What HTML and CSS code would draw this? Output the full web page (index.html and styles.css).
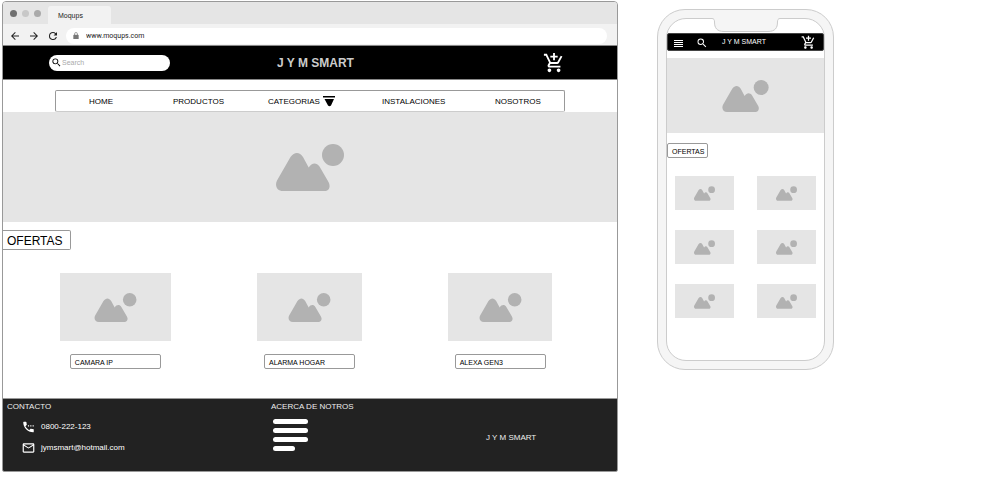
FILE: index.html
```html
<!DOCTYPE html>
<html lang="es">
<head>
<meta charset="utf-8">
<meta name="viewport" content="width=device-width, initial-scale=1">
<title>J Y M SMART</title>
<link rel="stylesheet" href="styles.css">
</head>
<body>
<svg class="symbols" aria-hidden="true">
  <symbol id="picture" viewBox="0 0 68 47">
    <circle cx="57" cy="11" r="11"/>
    <path d="M1 36.500L14.500 13C18.500 7.500 23.500 7.500 27 13L32.700 23.500C36 18.500 40.500 18.500 43.500 22.500L52.500 38C55 42.500 53 47 48.500 47H7C1 47-1.500 41.500 1 36.500Z"/>
  </symbol>
  <symbol id="cart" viewBox="0 0 24 24">
    <path d="M11 9h2V6h3V4h-3V1h-2v3H8v2h3v3zm-4 9c-1.100 0-1.990.9-1.990 2S5.900 22 7 22s2-.9 2-2-.9-2-2-2zm10 0c-1.100 0-1.990.9-1.990 2s.89 2 1.990 2 2-.9 2-2-.9-2-2-2zm-9.830-3.250.03-.12.900-1.630h7.450c.750 0 1.410-.410 1.750-1.030l3.860-7.010L19.420 4l-1.100 2-2.760 5H8.530l-.13-.270L6.160 6l-.950-2-.940-2H1v2h2l3.600 7.590-1.350 2.450c-.160.280-.250.610-.250.960 0 1.100.9 2 2 2h12v-2H7.420c-.130 0-.250-.110-.250-.250z"/>
  </symbol>
  <symbol id="search" viewBox="0 0 24 24">
    <path d="M15.500 14h-.79l-.28-.27A6.470 6.470 0 0 0 16 9.500 6.500 6.500 0 1 0 9.500 16c1.610 0 3.090-.59 4.230-1.570l.27.28v.79l5 4.990L20.490 19l-4.990-5zm-6 0C7.010 14 5 11.990 5 9.500S7.010 5 9.500 5 14 7.010 14 9.500 11.990 14 9.500 14z"/>
  </symbol>
  <symbol id="back" viewBox="0 0 24 24"><path d="M20 11H7.830l5.590-5.590L12 4l-8 8 8 8 1.410-1.410L7.830 13H20v-2z"/></symbol>
  <symbol id="forward" viewBox="0 0 24 24"><path d="M12 4l-1.410 1.410L16.170 11H4v2h12.170l-5.580 5.590L12 20l8-8z"/></symbol>
  <symbol id="reload" viewBox="0 0 24 24"><path d="M17.650 6.350A7.960 7.960 0 0 0 12 4a8 8 0 1 0 7.730 10h-2.080A6 6 0 1 1 12 6c1.660 0 3.140.69 4.220 1.780L13 11h7V4l-2.350 2.350z"/></symbol>
  <symbol id="lock" viewBox="0 0 24 24"><path d="M18 8h-1V6A5 5 0 0 0 7 6v2H6a2 2 0 0 0-2 2v11h16V10a2 2 0 0 0-2-2zM9 8V6a3 3 0 0 1 6 0v2z"/></symbol>
  <symbol id="phone" viewBox="0 0 24 24"><path d="M11 9h2v2h-2zm4 0h2v2h-2zm5 6.500c-1.250 0-2.450-.2-3.570-.57-.35-.11-.74-.03-1.020.24l-2.200 2.200a15.100 15.100 0 0 1-6.590-6.590l2.200-2.210c.28-.26.36-.65.25-1A11.360 11.360 0 0 1 8.500 4c0-.55-.45-1-1-1H4c-.55 0-1 .45-1 1 0 9.390 7.610 17 17 17 .55 0 1-.45 1-1v-3.500c0-.55-.45-1-1-1zM19 9v2h2V9z"/></symbol>
  <symbol id="mail" viewBox="0 0 24 24"><path d="M20 4H4c-1.100 0-1.990.9-1.990 2L2 18c0 1.100.9 2 2 2h16c1.100 0 2-.9 2-2V6c0-1.100-.9-2-2-2zm0 14H4V8l8 5 8-5v10zm-8-7L4 6h16l-8 5z"/></symbol>
</svg>

<main class="board">
  <section class="browser" aria-label="Vista de escritorio">
    <div class="tabs">
      <span class="dot dot-dark"></span><span class="dot"></span><span class="dot dot-mid"></span>
      <span class="tab">Moqups</span>
    </div>
    <div class="toolbar">
      <button class="tool" aria-label="Atrás"><svg><use href="#back"/></svg></button>
      <button class="tool" aria-label="Adelante"><svg><use href="#forward"/></svg></button>
      <button class="tool" aria-label="Recargar"><svg><use href="#reload"/></svg></button>
      <div class="address">
        <svg aria-hidden="true"><use href="#lock"/></svg>
        <input class="url" type="text" aria-label="Dirección" value="www.moqups.com">
      </div>
    </div>

    <header class="site-header">
      <label class="search">
        <svg aria-hidden="true"><use href="#search"/></svg>
        <input type="search" aria-label="Buscar" placeholder="Search">
      </label>
      <h1 class="brand">J Y M SMART</h1>
      <button class="cart" aria-label="Carrito"><svg><use href="#cart"/></svg></button>
    </header>

    <nav class="menu">
      <a href="#">HOME</a>
      <a href="#">PRODUCTOS</a>
      <a class="menu-drop" href="#">CATEGORIAS
        <svg viewBox="0 0 12 12" aria-hidden="true"><path d="M0 0h12v1.500H0zM1.500 3h9.500L8 9.500Q6.500 11 5 9.500z"/></svg>
      </a>
      <a href="#">INSTALACIONES</a>
      <a href="#">NOSOTROS</a>
    </nav>

    <div class="placeholder banner"><svg><use href="#picture"/></svg></div>
    <h2 class="offers-title">OFERTAS</h2>

    <div class="products">
      <figure class="product product-wide">
        <div class="placeholder"><svg><use href="#picture"/></svg></div>
        <figcaption>CAMARA IP</figcaption>
      </figure>
      <figure class="product product-mid">
        <div class="placeholder"><svg><use href="#picture"/></svg></div>
        <figcaption>ALARMA HOGAR</figcaption>
      </figure>
      <figure class="product">
        <div class="placeholder"><svg><use href="#picture"/></svg></div>
        <figcaption>ALEXA GEN3</figcaption>
      </figure>
    </div>

    <footer class="site-footer">
      <section>
        <h3>CONTACTO</h3>
        <ul class="contact">
          <li><svg aria-hidden="true"><use href="#phone"/></svg><a href="tel:0800222123">0800-222-123</a></li>
          <li><svg aria-hidden="true"><use href="#mail"/></svg><a href="mailto:jymsmart@hotmail.com">jymsmart@hotmail.com</a></li>
        </ul>
      </section>
      <section>
        <h3>ACERCA DE NOTROS</h3>
        <div class="lines"><i></i><i></i><i></i><i class="short"></i></div>
      </section>
      <p class="signature">J Y M SMART</p>
    </footer>
  </section>

  <section class="device" aria-label="Vista móvil">
    <div class="screen">
      <svg class="notch" viewBox="0 0 68 15" aria-hidden="true"><path d="M0 0V1C2 1 2 2 2 4C2 10 5 13.500 12 13.500H56C63 13.500 66 10 66 4C66 2 66 1 68 1V0Z"/><path class="notch-edge" d="M0 .5C2 .5 2.500 2 2.500 4C2.500 10 5 13.500 12 13.500H56C63 13.500 65.500 10 65.500 4C65.500 2 66 .5 68 .5"/></svg>
      <header class="app-header">
        <button class="app-menu" aria-label="Menú"><i></i><i></i><i></i><i></i></button>
        <button class="app-search" aria-label="Buscar"><svg><use href="#search"/></svg></button>
        <strong>J Y M SMART</strong>
        <button class="app-cart" aria-label="Carrito"><svg><use href="#cart"/></svg></button>
      </header>
      <div class="placeholder app-banner"><svg><use href="#picture"/></svg></div>
      <h2 class="app-title">OFERTAS</h2>
      <div class="tiles">
        <div class="placeholder"><svg><use href="#picture"/></svg></div>
        <div class="placeholder"><svg><use href="#picture"/></svg></div>
        <div class="placeholder"><svg><use href="#picture"/></svg></div>
        <div class="placeholder"><svg><use href="#picture"/></svg></div>
        <div class="placeholder"><svg><use href="#picture"/></svg></div>
        <div class="placeholder"><svg><use href="#picture"/></svg></div>
      </div>
    </div>
  </section>
</main>
</body>
</html>
```
FILE: styles.css
```css
* { box-sizing: border-box; }

body {
  margin: 0;
  background: #fff;
  color: #000;
  font: 8px/10px "Liberation Sans", Arial, sans-serif;
}

h1, h2, h3, p, ul, figure { margin: 0; padding: 0; font-weight: normal; }
ul { list-style: none; }
a { color: inherit; text-decoration: none; }
svg { display: block; fill: currentColor; }
button { display: block; padding: 0; border: 0; background: none; color: inherit; }
input { min-width: 0; padding: 0; border: 0; outline: 0; background: none; font: inherit; }

.symbols { display: none; }

.board {
  display: grid;
  grid-template-columns: 616fr 177px 132fr;
  column-gap: 39px;
  align-items: start;
  padding: 1px 0 0 2px;
}

.placeholder {
  display: flex;
  align-items: center;
  justify-content: center;
  background: #e5e5e5;
  color: #b2b2b2;
}

/* Desktop window */
.browser {
  border: 1px solid #999;
  border-radius: 4px 4px 2px 2px;
  overflow: hidden;
}

.tabs {
  display: flex;
  align-items: center;
  gap: 5px;
  height: 22px;
  padding-left: 7px;
  background: #e5e5e5;
}
.dot { width: 7px; height: 7px; border-radius: 50%; background: #c8c8c8; }
.dot-dark { background: #707070; }
.dot-mid { background: #aaa; }
.tab {
  align-self: flex-end;
  width: 63px;
  height: 18px;
  margin-left: 2px;
  padding-left: 10px;
  border-radius: 3px 3px 0 0;
  background: #f2f2f2;
  color: #222;
  font-size: 7px;
  line-height: 20px;
}

.toolbar {
  display: flex;
  align-items: center;
  height: 21px;
  padding: 2px 10px 0 6px;
  gap: 7px;
  background: #f2f2f2;
  color: #222;
}
.tool svg { width: 12px; height: 12px; }
.address {
  display: flex;
  flex: 1;
  align-items: center;
  gap: 6px;
  height: 16px;
  padding-left: 6px;
  border-radius: 8px;
  background: #fff;
}
.address svg { width: 8px; height: 8px; fill: #777; }
.url { flex: 1; color: #222; font: 7px/10px Roboto, sans-serif; }

.site-header {
  display: grid;
  grid-template-columns: 228fr 266fr 20px;
  align-items: center;
  height: 35px;
  padding: 0 54px 0 46px;
  border: solid #888;
  border-width: 1px 0;
  background: #000;
}
.search {
  display: flex;
  align-items: center;
  width: 121px;
  height: 16px;
  padding-left: 2px;
  border-radius: 8px;
  background: #fff;
}
.search svg { flex: none; width: 11px; height: 11px; }
.search input { width: 90px; font-size: 7px; line-height: 10px; }
.search input::placeholder { color: #aaa; }
.brand { color: #ccc; font-size: 12px; line-height: 14px; font-weight: bold; }
.cart { color: #fff; }
.cart svg { width: 22px; height: 22px; }

.menu {
  display: grid;
  grid-template-columns: 84fr 95fr 114fr 113fr 46fr;
  align-items: center;
  height: 22px;
  margin: 10px 52px 0;
  padding: 2px 23px 0 33px;
  border: 1px solid #999;
  border-bottom-color: #ccc;
  border-radius: 2px;
}
.menu-drop { display: flex; align-items: center; gap: 3px; }
.menu-drop svg { width: 12px; height: 12px; }

.banner { height: 110px; }
.banner svg { width: 68px; height: 47px; }

.offers-title {
  width: 68px;
  margin-top: 8px;
  padding: 2px 4px 0;
  border: 1px solid #999;
  border-left: 0;
  border-radius: 0 2px 2px 0;
  font-size: 12px;
  line-height: 16px;
}

.products {
  display: flex;
  gap: 86px;
  padding: 23px 65px 29px 57px;
}
.product {
  display: flex;
  flex: 104 1 0;
  flex-direction: column;
  align-items: center;
  gap: 13px;
}
.product-wide { flex-grow: 111; }
.product-mid { flex-grow: 106; }
.product .placeholder { width: 100%; height: 68px; }
.product svg { width: 43px; height: 29px; }
figcaption {
  width: 91px;
  padding: 3px 4px 0;
  border: 1px solid #999;
  border-radius: 2px;
  font-size: 7px;
  line-height: 10px;
}

.site-footer {
  display: grid;
  grid-template-columns: 264fr 215fr 131fr;
  min-height: 73px;
  padding: 3px 0 0 4px;
  border-top: 1px solid #999;
  background: #222;
  color: #fff;
}
.site-footer h3 { color: #eee; font-size: 8px; line-height: 10px; }
.contact { display: grid; gap: 7px; padding: 8px 0 0 14px; }
.contact li { display: flex; align-items: center; gap: 5px; }
.contact svg { width: 15px; height: 14px; }
.lines { display: grid; gap: 4px; padding: 7px 0 0 2px; }
.lines i { width: 35px; height: 5px; border-radius: 3px; background: #fff; }
.lines .short { width: 22px; }
.signature { padding-top: 31px; color: #eee; }

/* Phone */
.device {
  margin-top: 8px;
  padding: 8px;
  border: 1px solid #ccc;
  border-radius: 28px;
  background: #f5f5f5;
}
.screen {
  position: relative;
  padding: 14px 0 42px;
  border: 1px solid #ccc;
  border-radius: 20px;
  background: #fff;
}
.notch {
  position: absolute;
  top: -1px;
  left: 50%;
  width: 68px;
  height: 15px;
  margin-left: -34px;
  fill: #f5f5f5;
}
.notch-edge { fill: none; stroke: #ccc; }

.app-header {
  display: grid;
  grid-template-columns: 22px 26px 1fr 16px;
  align-items: center;
  height: 18px;
  padding: 0 6px;
  border: 1px solid #444;
  border-radius: 2px;
  background: #000;
  color: #fff;
}
.app-header strong { font-size: 7px; line-height: 10px; font-weight: normal; }
.app-menu { display: grid; gap: 1px; width: 9px; padding-top: 3px; }
.app-menu i { height: 1px; background: #fff; }
.app-search { padding-top: 2px; }
.app-search svg { width: 12px; height: 12px; }
.app-cart svg { width: 15px; height: 15px; }

.app-banner { height: 75px; margin-top: 7px; }
.app-banner svg { width: 47px; height: 32px; }
.app-title {
  width: 41px;
  margin-top: 10px;
  padding: 3px 0 0 4px;
  border: 1px solid #999;
  border-radius: 2px;
  font-size: 7px;
  line-height: 10px;
}
.tiles {
  display: grid;
  grid-template-columns: 1fr 1fr;
  gap: 20px 23px;
  padding: 18px 8px 0;
}
.tiles .placeholder { height: 34px; }
.tiles svg { width: 21px; height: 15px; }
```
